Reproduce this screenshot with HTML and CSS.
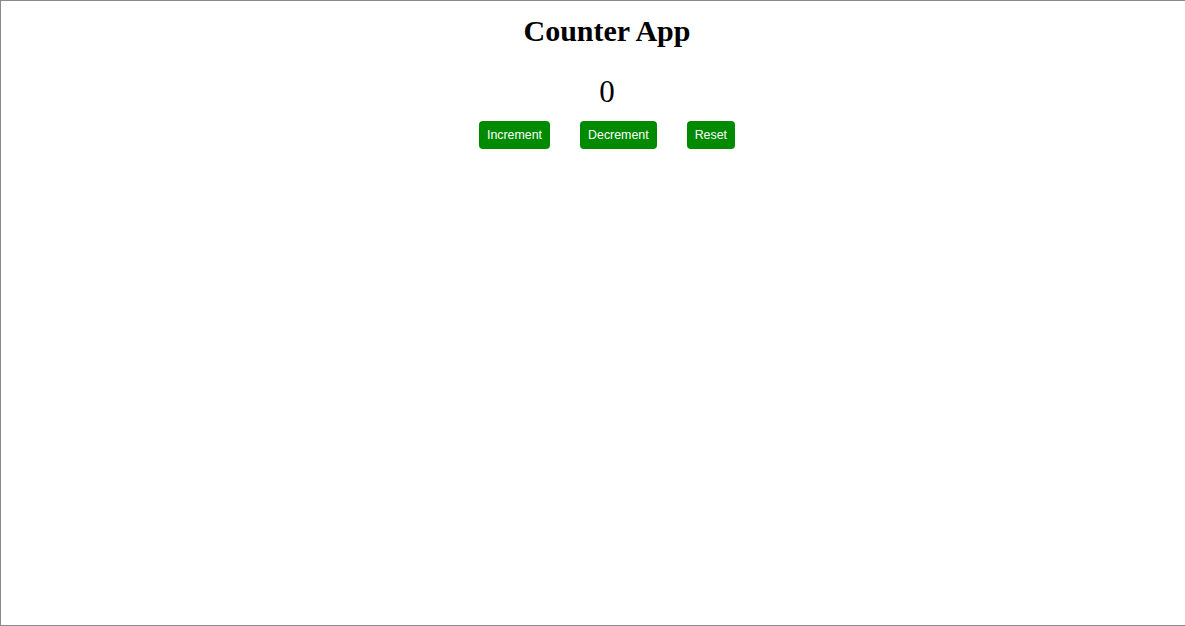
FILE: index.html
```html
<!DOCTYPE html>
<html>
<head>
<meta charset="utf-8">
<link rel="stylesheet" href="styles.css">
</head>
<body>
<div class="frame">
  <div class="app">
    <h1 class="title">Counter App</h1>
    <p class="count">0</p>
    <div class="actions">
      <button class="btn">Increment</button>
      <button class="btn">Decrement</button>
      <button class="btn">Reset</button>
    </div>
  </div>
</div>
</body>
</html>
```
FILE: styles.css
```css
html, body {
  margin: 0;
  padding: 0;
  background: #fff;
}
.frame {
  box-sizing: border-box;
  width: 1185px;
  height: 626px;
  border-top: 1px solid #8a8a8a;
  border-left: 1px solid #8a8a8a;
  border-bottom: 1px solid #8a8a8a;
  overflow: hidden;
}
.app {
  padding: 13px 0 0 28px;
  text-align: center;
  font-family: "Liberation Serif", "Times New Roman", serif;
  color: #000;
}
.title {
  margin: 0;
  font-size: 30px;
  line-height: 34px;
  font-weight: bold;
}
.count {
  margin: 25px 0 0;
  font-size: 31px;
  line-height: 37px;
}
.actions {
  margin-top: 11px;
  display: flex;
  justify-content: center;
  gap: 30px;
}
.btn {
  box-sizing: border-box;
  height: 28px;
  padding: 0 8px;
  border: none;
  border-radius: 4px;
  background: #008a00;
  color: #fff;
  font-family: "Liberation Sans", Arial, sans-serif;
  font-size: 12.4px;
  cursor: pointer;
}
```
